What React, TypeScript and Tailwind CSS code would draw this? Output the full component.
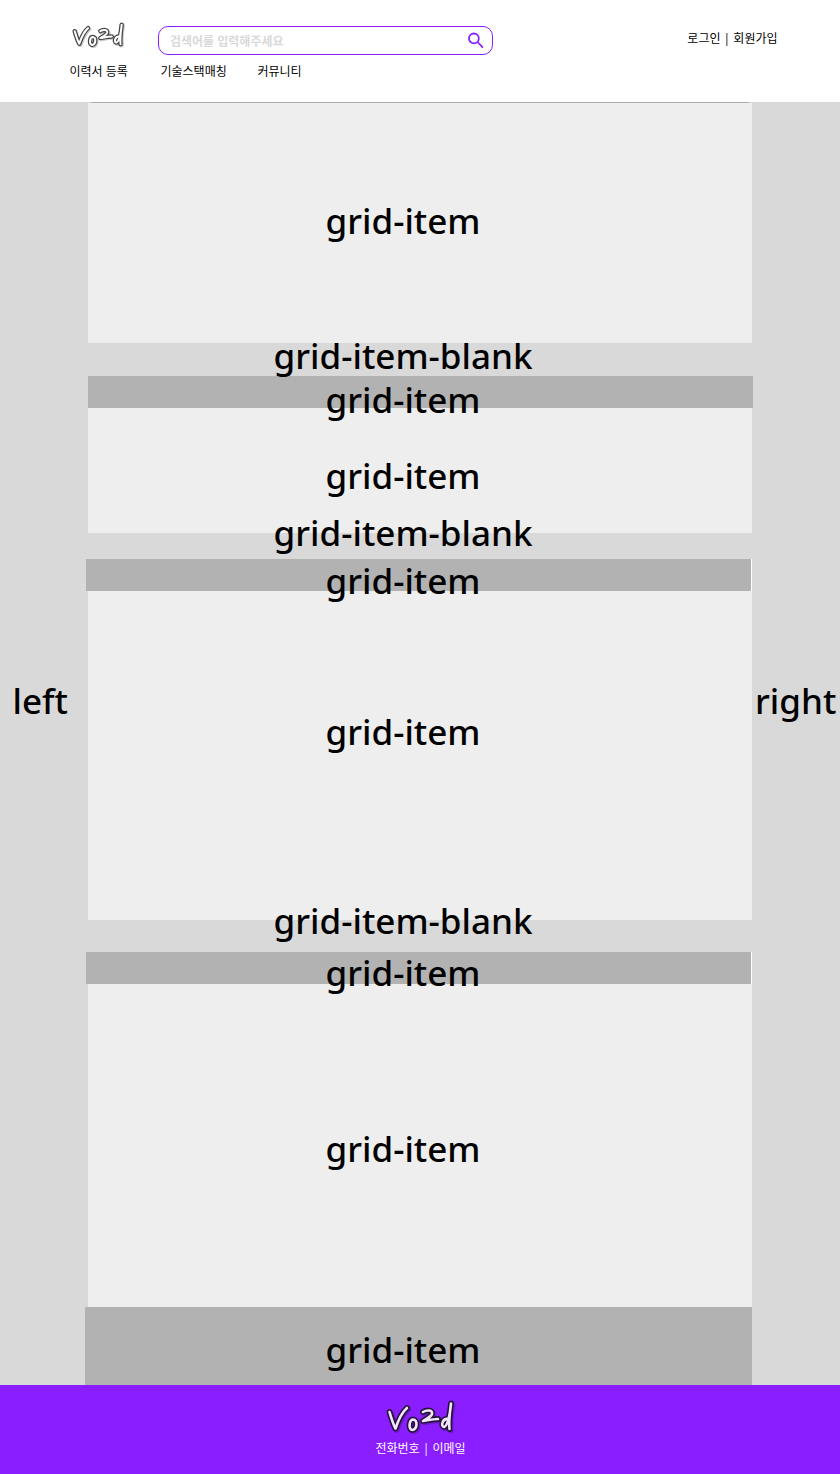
import React from "react";

const bigText =
  "font-['Noto_Sans','Open_Sans',sans-serif] text-[35px] font-medium leading-[0px] whitespace-nowrap";

function Logo({ className, fill, outline }: { className: string; fill: string; outline: string }) {
  const strokes = (
    <>
      <path d="M3.500 12 C5 17 7 24 9.500 28.500 C12 21 15 13 21 8" />
      <path d="M27 19.500 C23 20 22 30 26.500 30 C31.500 29 32 19.500 27 19.500" />
      <path d="M37 12 C41 9.500 47 10 46 14 C45 17 40 19 37 21 C43 20 48 19 52 19" />
      <path d="M62 19 C57 18 54 26 58 27 C62 26 64.500 11 65 3.500 C64 11 62.500 21 63.500 29" />
    </>
  );
  return (
    <svg viewBox="0 0 68 34" className={`overflow-visible ${className}`} fill="none" strokeLinecap="round" strokeLinejoin="round">
      <g stroke="#000" strokeOpacity=".2" strokeWidth="6" transform="translate(1.3 1.3)">{strokes}</g>
      <g stroke={outline} strokeWidth="5.8">{strokes}</g>
      <g stroke={fill} strokeWidth="2.6">{strokes}</g>
    </svg>
  );
}

function Row({ className, labelClass, label = "grid-item" }: { className: string; labelClass: string; label?: string }) {
  return (
    <section className={`flow-root ${className}`}>
      <p className={`w-[630px] text-center ${bigText} ${labelClass}`}>{label}</p>
    </section>
  );
}

export default function App() {
  return (
    <div className="h-[1474px] w-[840px] overflow-hidden bg-[#d9d9d9] font-['Noto_Sans','Noto_Sans_CJK_KR',sans-serif] text-[12px] text-black">
      <header className="h-[102px] bg-white pt-[22px] pr-[62.5px] pl-[69.5px]">
        <div className="flex h-[34px] items-start">
          <Logo className="ml-[2.5px] h-[26px] w-[52px]" fill="#fff" outline="#444" />
          <form className="mt-[4px] ml-[34px] flex h-[29px] w-[335px] items-center justify-between rounded-[10px] border border-[#8b1eff] pr-[8px] pl-[11px]">
            <span className="pt-[2px] leading-[18px] font-bold text-[#d9d9d9]">검색어를 입력해주세요</span>
            <svg viewBox="0 0 17 17" className="h-[17px] w-[17px]" fill="none" stroke="#8b1eff" strokeWidth="1.8">
              <circle cx="6.9" cy="6.4" r="4.9" />
              <path d="m10.500 10 5.500 5.700" />
            </svg>
          </form>
          <nav className="mt-[8px] ml-auto leading-[18px] whitespace-pre">
            로그인 <span className="text-[#222]">|</span> 회원가입
          </nav>
        </div>
        <nav className="mt-[7px] flex leading-[18px]">
          <a className="w-[91px]">이력서 등록</a>
          <a className="w-[97px]">기술스택매칭</a>
          <a>커뮤니티</a>
        </nav>
      </header>

      <main className="grid h-[1283px] grid-cols-[88px_664px_88px]">
        <aside className={`pt-[599px] pl-[12.500px] ${bigText}`}>left</aside>
        <div>
          <div className="mx-[3px] h-px bg-[#aaaab0]" />
          <Row className="-mt-px h-[241px] border-t border-transparent bg-[#eee] bg-clip-padding" labelClass="mt-[118px]" />
          <Row className="h-[33px]" labelClass="mt-[13px]" label="grid-item-blank" />
          <Row className="-mr-px h-[32px] bg-[#b2b2b2]" labelClass="mt-[24px]" />
          <Row className="h-[125px] bg-[#eee]" labelClass="mt-[68px]" />
          <Row className="h-[26px]" labelClass="mt-0" label="grid-item-blank" />
          <Row className="-ml-[2px] h-[32px] border-r border-white bg-[#b2b2b2] bg-clip-padding pl-[2px]" labelClass="mt-[22px]" />
          <Row className="h-[329px] bg-[#eee]" labelClass="mt-[141px]" />
          <Row className="h-[32px]" labelClass="mt-[1px]" label="grid-item-blank" />
          <Row className="-ml-[2px] h-[32px] border-r border-white bg-[#b2b2b2] bg-clip-padding pl-[2px]" labelClass="mt-[21px]" />
          <Row className="h-[323px] bg-[#eee]" labelClass="mt-[165px]" />
          <Row className="-ml-[3px] h-[78px] bg-[#b2b2b2] pl-[3px]" labelClass="mt-[43px]" />
        </div>
        <aside className={`pt-[599px] pl-[3px] ${bigText}`}>right</aside>
      </main>

      <footer className="flex h-[89px] flex-col items-center bg-[#8b1eff] pt-[15px] text-white">
        <Logo className="h-[34px] w-[68px]" fill="#f4e4ff" outline="#24143a" />
        <p className="mt-[6px] ml-px leading-[18px] whitespace-pre">
          전화번호 <span className="text-[#f0e0ff]">|</span> 이메일
        </p>
      </footer>
    </div>
  );
}
